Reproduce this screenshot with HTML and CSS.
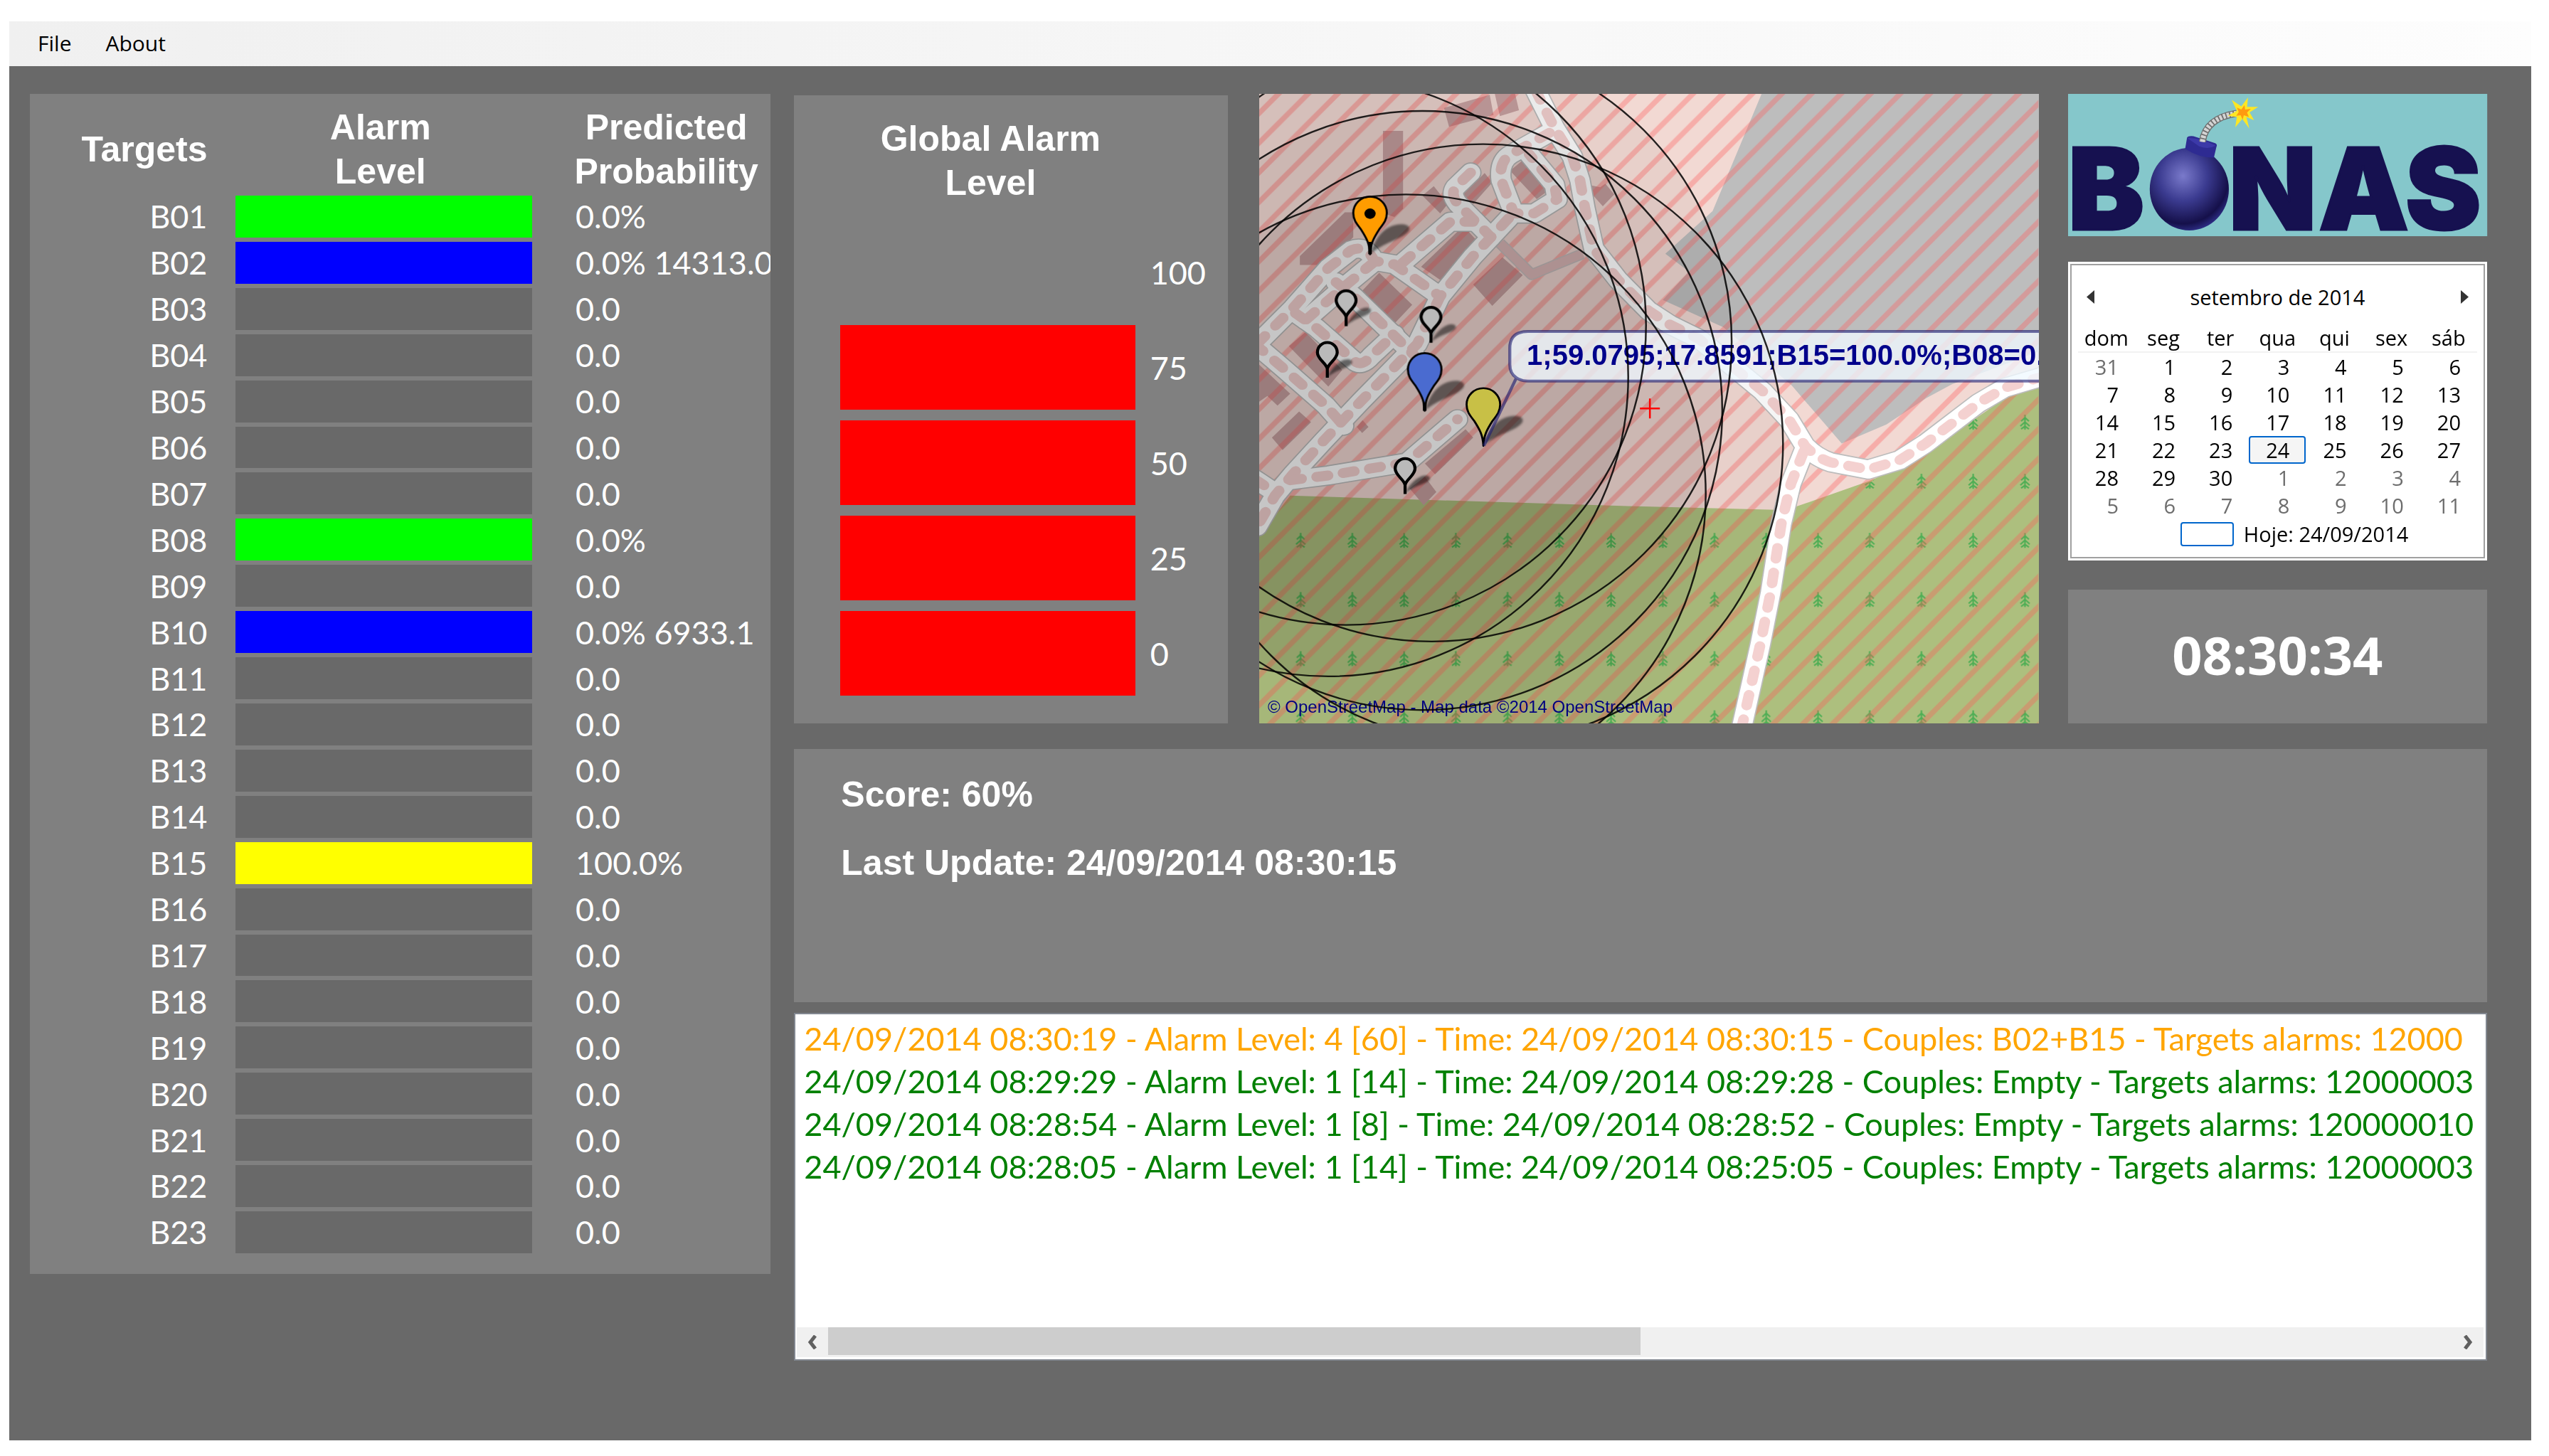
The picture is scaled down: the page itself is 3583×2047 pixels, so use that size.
FILE: index.html
```html
<!DOCTYPE html>
<html lang="en">
<head>
<meta charset="utf-8">
<title>BONAS</title>
<link rel="stylesheet" href="styles.css">
</head>
<body>
<div class="window">
  <nav class="menu"><button type="button">File</button><button type="button">About</button></nav>
  <main class="content">
    <section class="panel targets">
      <table class="target-table">
        <colgroup><col class="c-name"><col class="c-bar"><col class="c-prob"></colgroup>
        <thead><tr><th class="h-name">Targets</th><th class="h-bar">Alarm<br>Level</th><th class="h-prob">Predicted<br>Probability</th></tr></thead>
        <tbody id="targets"></tbody>
      </table>
    </section>
    <div class="right">
      <div class="top">
        <section class="panel global">
          <h2>Global Alarm<br>Level</h2>
          <ul class="scale">
            <li><i></i><span>100</span></li>
            <li class="on"><i></i><span>75</span></li>
            <li class="on"><i></i><span>50</span></li>
            <li class="on"><i></i><span>25</span></li>
            <li class="on"><i></i><span>0</span></li>
          </ul>
        </section>
        <div class="top-right">
          <svg class="map" viewBox="0 0 1095 885" preserveAspectRatio="none" role="img" aria-label="Map">
            <defs>
              <pattern id="hatch" width="41.6" height="41.6" patternUnits="userSpaceOnUse">
                <path d="M37 -10L-23 50M78.600 -10L18.600 50" stroke="#ff5959" stroke-opacity=".34" stroke-width="7.500"/>
              </pattern>
              <pattern id="trees" x="21.800" y="440" width="72.700" height="83.100" patternUnits="userSpaceOnUse">
                <path d="M36.400 11V32M36.400 15L31 20M36.400 15L42 20M36.400 21L30 27M36.400 21L43 27M36.400 27L31 31M36.400 27L42 31" stroke="#4fae55" stroke-width="2.200" fill="none"/>
              </pattern>
              <g id="roads">
                <path d="M1115 20L1190 180L1260 300L1290 400L1310 520L1345 690L1440 820L1560 950L1646 1010L1760 1070L2009 1290L2113 1410L2175 1520Q2220 1570 2278 1590L2424 1620L2548 1580L2650 1510L2858 1340L2962 1275L3120 1225"/>
                <path d="M2170 1545L2120 1680L2082 1850L2040 2140L1999 2360L1926 2710"/>
                <path d="M20 1090L160 940L300 770L390 695Q450 670 480 740L560 755L740 890"/>
                <path d="M480 745L350 860L210 990"/>
                <path d="M170 960L250 1020L400 1160Q430 1190 470 1140L560 1050"/>
                <path d="M330 830L400 890L640 1140"/>
                <path d="M590 750L780 575L870 575"/>
                <path d="M860 368L800 430Q780 460 810 500L940 640"/>
                <path d="M1170 200L1020 290Q970 320 980 400L1030 540L1110 540L1200 480L1190 420L1090 290"/>
                <path d="M1010 560L870 720L740 890L650 1090L430 1330L280 1500L160 1640L90 1730L20 1860"/>
                <path d="M10 1090L120 1190L290 1350L360 1435"/>
                <path d="M150 1665L300 1645L610 1590L808 1408"/>
                <path d="M10 1660L95 1720"/>
              </g>
              <g id="circles">
                <ellipse cx="370" cy="1012" rx="1180" ry="1263"/><ellipse cx="605" cy="1723" rx="1180" ry="1263"/>
                <ellipse cx="909" cy="1511" rx="1180" ry="1263"/><ellipse cx="670" cy="1371" rx="1180" ry="1263"/>
                <ellipse cx="707" cy="1082" rx="1180" ry="1263"/><ellipse cx="300" cy="1229" rx="1180" ry="1263"/>
              </g>
              <path id="pin" d="M0 0C-2 -45 -14 -68 -36 -105C-54 -130 -66 -145 -66 -174A66 69 0 0 1 66 -174C66 -145 54 -130 36 -105C14 -68 2 -45 0 0Z" stroke="#000" stroke-width="8"/>
              <path id="pin-shadow" d="M4 -4C10 -40 40 -110 100 -123C150 -135 172 -110 140 -85C110 -60 60 -50 4 -4Z" fill="#000" fill-opacity=".5"/>
              <g id="small-pin"><path d="M2 -3C10 -30 35 -62 65 -75C95 -85 110 -65 85 -50C60 -35 30 -30 2 -3Z" fill="#000" fill-opacity=".5" filter="url(#soft)"/><path d="M0 0V-50M0 -38C-4 -62 -39 -78 -39 -107A39 42 0 0 1 39 -107C39 -78 4 -62 0 -38Z" stroke="#000" stroke-width="12" fill="#bababa"/></g>
              <filter id="soft"><feGaussianBlur stdDeviation="5"/></filter>
            </defs>
            <rect width="1095" height="885" fill="#f2d9d3"/>
            <g transform="translate(-10 -12) scale(.35714 .33333)">
              <path fill="#bdbdbd" d="M2007 30L1812 530L1626 710L1719 785L1616 905L1854 1020L2123 1265L2320 1510L2496 1430L2651 1320L2755 1260L3100 1120V30Z"/>
              <path fill="#adbf7e" d="M20 1910L150 1730L1512 1775L2061 1790L2144 1775L2424 1670L2579 1600L2962 1320L3100 1260V2700H20Z"/>
              <g fill="#c8a2a2">
                <path d="M515 192H594V520L560 555L515 540ZM188 757V720L365 535H398V640L290 757ZM755 95L935 40L950 125L775 175ZM955 36H1035L1050 105L975 130ZM670 465L715 425L770 500L740 540ZM830 460L915 370L945 410L870 500ZM1015 360L1060 320L1170 440L1120 480ZM1325 420L1370 430L1390 415L1425 460L1380 510L1330 450Z"/>
                <path d="M665 765L810 615H850L885 655L740 820ZM430 870L500 790L630 925L560 1005ZM870 840L985 725L1065 800L945 930ZM145 1100L210 1040L355 1200L300 1270ZM20 1170L150 1300L100 1350L60 1310L20 1340ZM78 1485L185 1375L232 1420L120 1538ZM680 1595L840 1450L870 1485L720 1640ZM620 1700L680 1650L725 1715L675 1770ZM412 1440L435 1412L458 1440L433 1466Z"/>
              </g>
            </g>
            <path fill="url(#trees)" d="M0 620L45 565L530 580L725 585L860 545L920 505L1095 408V885H0Z"/>
            <rect width="1095" height="885" fill="url(#hatch)"/>
            <g transform="translate(-10 -12) scale(.35714 .33333)" fill="none" stroke-linejoin="round">
              <path d="M975 665L1100 798L1300 710" stroke="#c9c0c0" stroke-width="46"/>
              <path d="M975 665L1100 798L1300 710" stroke="#e0bcbc" stroke-width="36"/>
              <use href="#roads" stroke="#bcbcbc" stroke-width="86" stroke-linecap="round"/>
              <use href="#roads" stroke="#fff" stroke-width="76" stroke-linecap="round"/>
              <use href="#roads" stroke="#f4d1d0" stroke-width="42" stroke-dasharray="45 60" stroke-linecap="round"/>
              <use href="#circles" fill="#000" fill-opacity=".04"/>
              <g filter="url(#soft)"><use href="#pin-shadow" x="464" y="712"/><use href="#pin-shadow" x="679" y="1372"/><use href="#pin-shadow" x="910" y="1520"/></g>
              <use href="#small-pin" x="370" y="1015"/><use href="#small-pin" x="704" y="1085"/><use href="#small-pin" x="296" y="1233"/><use href="#small-pin" x="602" y="1723"/>
              <use href="#pin" x="464" y="712" fill="#ff9c00"/><circle cx="464" cy="541" r="22" fill="#000"/>
              <path d="M464 660V712M679 1330V1372" stroke="#000" stroke-width="14"/>
              <use href="#pin" x="679" y="1372" fill="#4a6bd0"/>
              <use href="#pin" x="910" y="1520" fill="#c8c046"/>
              <path d="M3200 1038H1085Q1014 1038 1014 1108V1177Q1014 1247 1085 1247H3200Z" fill="#f0f8ff" fill-opacity=".78"/>
              <path d="M3200 1038H1085Q1014 1038 1014 1108V1177Q1014 1215 1040 1233L912 1520M1040 1233Q1060 1247 1085 1247H3200" stroke="#191970" stroke-opacity=".6" stroke-width="12"/>
            </g>
            <text class="callout" x="376" y="381">1;59.0795;17.8591;B15=100.0%;B08=0.</text>
            <text class="credit" x="12" y="870">© OpenStreetMap - Map data ©2014 OpenStreetMap</text>
            <use href="#circles" transform="translate(-10 -12) scale(.35714 .33333)" fill="none" stroke="#000" stroke-opacity=".85" stroke-width="7"/>
            <path d="M535 442H563M549 428V456" stroke="#f00" stroke-width="2.500"/>
          </svg>
          <aside class="side">
            <svg class="logo" viewBox="0 0 589 200" preserveAspectRatio="none" role="img" aria-label="BONAS">
              <defs>
                <radialGradient id="ball" cx=".42" cy=".34" r=".68"><stop offset="0" stop-color="#7a7acb"/><stop offset=".45" stop-color="#3b3b90"/><stop offset=".85" stop-color="#15104a"/><stop offset="1" stop-color="#2d2d85"/></radialGradient>
              </defs>
              <rect width="589" height="200" fill="#85c7cb"/>
              <text class="logo-text" y="191"><tspan x="0">B</tspan><tspan x="226">N</tspan><tspan x="352">A</tspan><tspan x="474">S</tspan></text>
              <g transform="scale(.4483 .4464) translate(-59 -49)">
                <ellipse cx="439" cy="349" rx="124" ry="130" fill="url(#ball)"/>
                <path d="M432 186Q436 180 452 182L520 204Q528 208 524 216L516 250Q470 250 426 222Z" fill="#2e2b92"/>
                <path d="M432 188Q470 185 522 212Q500 225 470 214Z" fill="#3c39a8"/>
                <path d="M480 200Q490 125 588 110" fill="none" stroke="#6e6e6e" stroke-width="22"/>
                <path d="M480 200Q490 125 588 110" fill="none" stroke="#d4d4d4" stroke-width="16" stroke-dasharray="8 4"/>
                <path d="M623 60L620 90L655 90L628 107L642 132L618 122L627 158L605 128L583 154L588 122L560 118L588 102L572 68L602 88Z" fill="#fde725"/>
                <path d="M612 84L614 98L632 96L620 108L626 122L610 116L606 130L600 116L586 118L594 106L588 92L602 98Z" fill="#ff9a10"/>
              </g>
            </svg>
            <section class="calendar">
              <div class="cal-inner">
                <header><button type="button" aria-label="Previous month"><svg viewBox="0 0 11 19"><path d="M11 0V19L0 9.500Z"/></svg></button><h3>setembro de 2014</h3><button type="button" aria-label="Next month"><svg viewBox="0 0 11 19"><path d="M0 0V19L11 9.500Z"/></svg></button></header>
                <table>
                  <thead><tr><th>dom</th><th>seg</th><th>ter</th><th>qua</th><th>qui</th><th>sex</th><th>sáb</th></tr></thead>
                  <tbody>
                    <tr><td class="off">31</td><td>1</td><td>2</td><td>3</td><td>4</td><td>5</td><td>6</td></tr>
                    <tr><td>7</td><td>8</td><td>9</td><td>10</td><td>11</td><td>12</td><td>13</td></tr>
                    <tr><td>14</td><td>15</td><td>16</td><td>17</td><td>18</td><td>19</td><td>20</td></tr>
                    <tr><td>21</td><td>22</td><td>23</td><td class="today">24</td><td>25</td><td>26</td><td>27</td></tr>
                    <tr><td>28</td><td>29</td><td>30</td><td class="off">1</td><td class="off">2</td><td class="off">3</td><td class="off">4</td></tr>
                    <tr><td class="off">5</td><td class="off">6</td><td class="off">7</td><td class="off">8</td><td class="off">9</td><td class="off">10</td><td class="off">11</td></tr>
                  </tbody>
                </table>
                <footer><i></i><span>Hoje: 24/09/2014</span></footer>
              </div>
            </section>
            <section class="panel clock">08:30:34</section>
          </aside>
        </div>
      </div>
      <section class="panel status"><p>Score: 60%</p><p>Last Update: 24/09/2014 08:30:15</p></section>
      <section class="log">
        <ul>
          <li class="warn">24/09/2014 08:30:19 - Alarm Level: 4 [60] - Time: 24/09/2014 08:30:15 - Couples: B02+B15 - Targets alarms: 12000</li>
          <li>24/09/2014 08:29:29 - Alarm Level: 1 [14] - Time: 24/09/2014 08:29:28 - Couples: Empty - Targets alarms: 12000003</li>
          <li>24/09/2014 08:28:54 - Alarm Level: 1 [8] - Time: 24/09/2014 08:28:52 - Couples: Empty - Targets alarms: 120000010</li>
          <li>24/09/2014 08:28:05 - Alarm Level: 1 [14] - Time: 24/09/2014 08:25:05 - Couples: Empty - Targets alarms: 12000003</li>
        </ul>
        <div class="scroll">
          <button type="button" aria-label="Scroll left"><svg viewBox="0 0 16 20"><path d="M12 1L5 10L12 19"/></svg></button>
          <div class="track"><div class="thumb"></div></div>
          <button type="button" aria-label="Scroll right"><svg viewBox="0 0 16 20"><path d="M4 1L11 10L4 19"/></svg></button>
        </div>
      </section>
    </div>
  </main>
</div>
<script src="targets.js"></script>
</body>
</html>
```
FILE: targets.js
```js
const active = {
  1: ["green", "0.0%"],
  2: ["blue", "0.0% 14313.0"],
  8: ["green", "0.0%"],
  10: ["blue", "0.0% 6933.1"],
  15: ["yellow", "100.0%"]
};
const body = document.getElementById("targets");
for (let n = 1; n <= 23; n++) {
  const [level, text] = active[n] || ["idle", "0.0"];
  const row = body.insertRow();
  const name = row.insertCell();
  name.className = "name";
  name.textContent = "B" + String(n).padStart(2, "0");
  row.insertCell().className = "bar " + level;
  const prob = row.insertCell();
  prob.className = "prob";
  prob.textContent = text;
}
```
FILE: styles.css
```css
* { box-sizing: border-box; }
body { margin: 0; background: #fff; color: #fff; font-family: Lato, "Liberation Sans", sans-serif; font-size: 45px; }
h2, h3, p, ul { margin: 0; padding: 0; }
ul { list-style: none; }
button { border: 0; padding: 0; background: none; font: inherit; color: inherit; }

.window { margin: 30px 25px 22px 13px; min-height: calc(100vh - 52px); display: flex; flex-direction: column; background: #696969; }
.menu { display: flex; gap: 48px; height: 63px; padding: 0 0 2px 40px; background: linear-gradient(90deg, #f0f0f0, #fdfdfd); color: #000; font-family: "Open Sans", sans-serif; font-size: 30px; }
.content { display: grid; grid-template-columns: minmax(0, 1041fr) minmax(0, 2379fr); gap: 33px; align-items: start; padding: 39px 62px 0 29px; }
.panel { background: #808080; }

.targets { padding-bottom: 26px; overflow: hidden; }
.target-table { width: 100%; height: 1633px; table-layout: fixed; border-spacing: 0; }
.target-table th { height: 140px; padding: 16px 0 0; line-height: 62px; white-space: nowrap; }
.target-table th, .global h2, .status { font-family: "Liberation Sans", sans-serif; font-weight: 700; font-size: 50px; }
.target-table td { padding: 0; line-height: 58px; white-space: nowrap; }
.c-name { width: 27.8%; }
.c-bar { width: 40%; }
.target-table .h-name { text-align: right; padding-right: 40px; }
.target-table .h-bar { padding-right: 10px; }
.target-table .h-prob { padding-left: 42px; }
.target-table .name { text-align: right; padding-right: 40px; }
.target-table .prob { padding-left: 61px; }
.bar { border-block: 3px solid #808080; }
.idle { background: #696969; }
.green { background: #0f0; }
.blue { background: #00f; }
.yellow { background: #ff0; }

.right { min-width: 0; }
.top { display: grid; grid-template-columns: minmax(0, 610fr) minmax(0, 1725fr); gap: 44px; margin-bottom: 36px; }
.top-right { display: grid; grid-template-columns: minmax(0, 1095fr) minmax(0, 589fr); gap: 41px; }
.global { margin-top: 2px; padding: 30px 0 39px 65px; display: flex; flex-direction: column; justify-content: space-between; }
.global h2 { line-height: 62px; text-align: center; padding-right: 123px; }
.scale { display: grid; gap: 15px; }
.scale li { display: flex; align-items: center; gap: 21px; height: 119px; }
.scale i { width: 76%; height: 100%; }
.scale .on i { background: #f00; }
.map { display: block; width: 100%; height: auto; aspect-ratio: 1095 / 885; }
.callout { font: 700 40px "Liberation Sans", sans-serif; fill: #00008b; }
.credit { font: 24px "Liberation Sans", sans-serif; fill: #000080; }

.side { display: flex; flex-direction: column; }
.logo { display: block; width: 100%; height: auto; aspect-ratio: 589 / 200; margin-bottom: 36px; overflow: visible; }
.logo-text { font: 900 160px Inter, sans-serif; fill: #161150; stroke: #161150; stroke-width: 3px; }
.calendar { background: #fff; padding: 3px; margin-bottom: 41px; color: #000; font-family: "Open Sans", sans-serif; font-size: 29px; }
.cal-inner { border: 2px solid #a0a0a0; padding: 22px 9px 12px; }
.calendar header { display: flex; justify-content: space-between; align-items: center; height: 45px; padding: 0 12px; }
.calendar h3 { font-size: 29px; font-weight: 400; }
.calendar header svg { display: block; width: 11px; height: 19px; fill: #333; }
.calendar table { width: 100%; table-layout: fixed; border-spacing: 0; margin-top: 15px; }
.calendar th { font-weight: 400; padding: 0; height: 41px; line-height: 36px; border-bottom: 2px solid #f2f2f2; }
.calendar td { height: 39px; line-height: 35px; padding: 0 21px 0 0; text-align: right; border: 2px solid transparent; }
.calendar td.off { color: #6d6d6d; }
.calendar td.today { background: #f5f5f5; border-color: #0066cc; border-radius: 4px; }
.calendar footer { display: flex; align-items: center; gap: 14px; height: 41px; padding-left: 144px; line-height: 41px; }
.calendar footer i { width: 75px; height: 34px; border: 2px solid #0066cc; border-radius: 4px; }
.clock { flex: 1; display: flex; align-items: center; justify-content: center; padding-bottom: 4px; font-family: "Open Sans", sans-serif; font-weight: 700; font-size: 74px; line-height: 90px; }

.status { height: 356px; padding: 32px 66px; line-height: 64px; }
.status p + p { margin-top: 32px; }
.log { margin-top: 15px; height: 489px; display: flex; flex-direction: column; justify-content: space-between; background: #fff; border: 2px solid #828790; padding: 4px 3px 3px 2px; color: #008000; }
.log ul { padding: 0 0 0 10px; overflow: hidden; }
.log li { line-height: 60px; white-space: nowrap; }
.log .warn { color: #ffa500; }
.scroll { display: flex; height: 42px; background: #f0f0f0; }
.scroll button { width: 44px; display: flex; align-items: center; justify-content: center; }
.scroll svg { width: 16px; height: 20px; fill: none; stroke: #606060; stroke-width: 5; }
.track { flex: 1; }
.thumb { width: 50%; height: 39px; background: #cdcdcd; }
```
